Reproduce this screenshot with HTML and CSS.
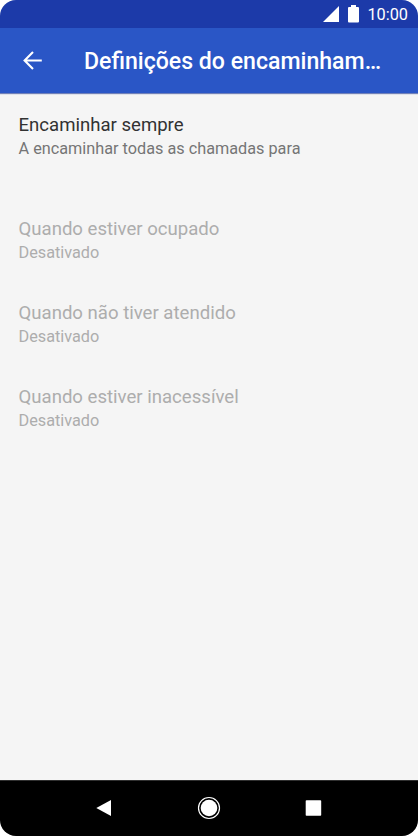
FILE: index.html
```html
<!DOCTYPE html>
<html lang="pt">
<head>
<meta charset="utf-8">
<title>Definições do encaminhamento</title>
<link rel="stylesheet" href="styles.css">
</head>
<body>
<div class="phone">
  <div class="status">
    <svg class="signal" width="16" height="16" viewBox="0 0 16 16"><path d="M16 0v16H0z"/></svg>
    <svg class="battery" width="11" height="18" viewBox="0 0 11 18"><path d="M3 0h5v2h2q1 0 1 1v13.5q0 1-1 1H1q-1 0-1-1V3q0-1 1-1h2z"/></svg>
    <span class="time">10:00</span>
  </div>
  <header class="appbar">
    <svg class="back" width="19" height="19" viewBox="0 0 19 19"><path d="M18.8 9.5H1.6M10 1.1 1.6 9.5l8.4 8.4"/></svg>
    <h1 class="heading">Definições do encaminham…</h1>
  </header>
  <main class="list">
    <div class="item item-active">
      <div class="name">Encaminhar sempre</div>
      <div class="detail">A encaminhar todas as chamadas para</div>
    </div>
    <div class="item">
      <div class="name">Quando estiver ocupado</div>
      <div class="detail">Desativado</div>
    </div>
    <div class="item">
      <div class="name">Quando não tiver atendido</div>
      <div class="detail">Desativado</div>
    </div>
    <div class="item">
      <div class="name">Quando estiver inacessível</div>
      <div class="detail">Desativado</div>
    </div>
  </main>
  <nav class="navbar">
    <svg width="24" height="24" viewBox="0 0 24 24"><path d="M4.3 12 19 4v16z"/></svg>
    <svg width="24" height="24" viewBox="0 0 24 24"><circle cx="12" cy="12" r="8.3"/><circle class="ring" cx="12" cy="12" r="10.5"/></svg>
    <svg width="24" height="24" viewBox="0 0 24 24"><rect x="4.7" y="4.2" width="15.5" height="15.5" rx=".8"/></svg>
  </nav>
</div>
</body>
</html>
```
FILE: styles.css
```css
body {
  margin: 0;
  background: #fff;
  font-family: Roboto, sans-serif;
}

.phone {
  display: flex;
  flex-direction: column;
  width: 418px;
  height: 836px;
  overflow: hidden;
  border-radius: 16px;
  background: #f5f5f5;
}

.status {
  display: flex;
  flex: none;
  box-sizing: border-box;
  height: 28px;
  padding: 5px 10px 0 0;
  justify-content: flex-end;
  background: #1c3aa9;
  color: #fff;
}

.status svg {
  fill: #fff;
}

.signal {
  margin: 1px 9.5px 0 0;
}

.battery {
  margin-right: 8px;
}

.time {
  font-size: 16.3px;
  font-weight: 400;
  line-height: 19px;
}

.appbar {
  display: flex;
  flex: none;
  z-index: 1;
  box-sizing: border-box;
  height: 65px;
  padding-left: 23px;
  align-items: center;
  background: #2a56c6;
  box-shadow: 0 1px 1px #7181b8;
  color: #fff;
}

.back {
  margin-right: 42px;
  fill: none;
  stroke: #fff;
  stroke-width: 2.1;
}

.heading {
  margin: 3px 0 0;
  font-size: 23.1px;
  font-weight: 500;
  line-height: 30px;
  white-space: nowrap;
}

.list {
  flex: 1;
  padding: 20px 18.5px 0;
}

.item {
  height: 84.4px;
  color: #adadad;
}

.item-active {
  height: 103.6px;
  color: #323232;
}

.name {
  font-size: 18.58px;
  line-height: 25px;
}

.detail {
  font-size: 16.25px;
  line-height: 22px;
}

.item-active .detail {
  color: #757575;
}

.navbar {
  display: flex;
  flex: none;
  box-sizing: border-box;
  height: 56px;
  padding: 0 .6px 1px 0;
  border-top: 1px solid #303030;
  align-items: center;
  justify-content: center;
  gap: 80.5px;
  background: #000;
}

.navbar svg {
  fill: #fff;
}

.navbar .ring {
  fill: none;
  stroke: #fff;
  stroke-width: 1.2;
}
```
